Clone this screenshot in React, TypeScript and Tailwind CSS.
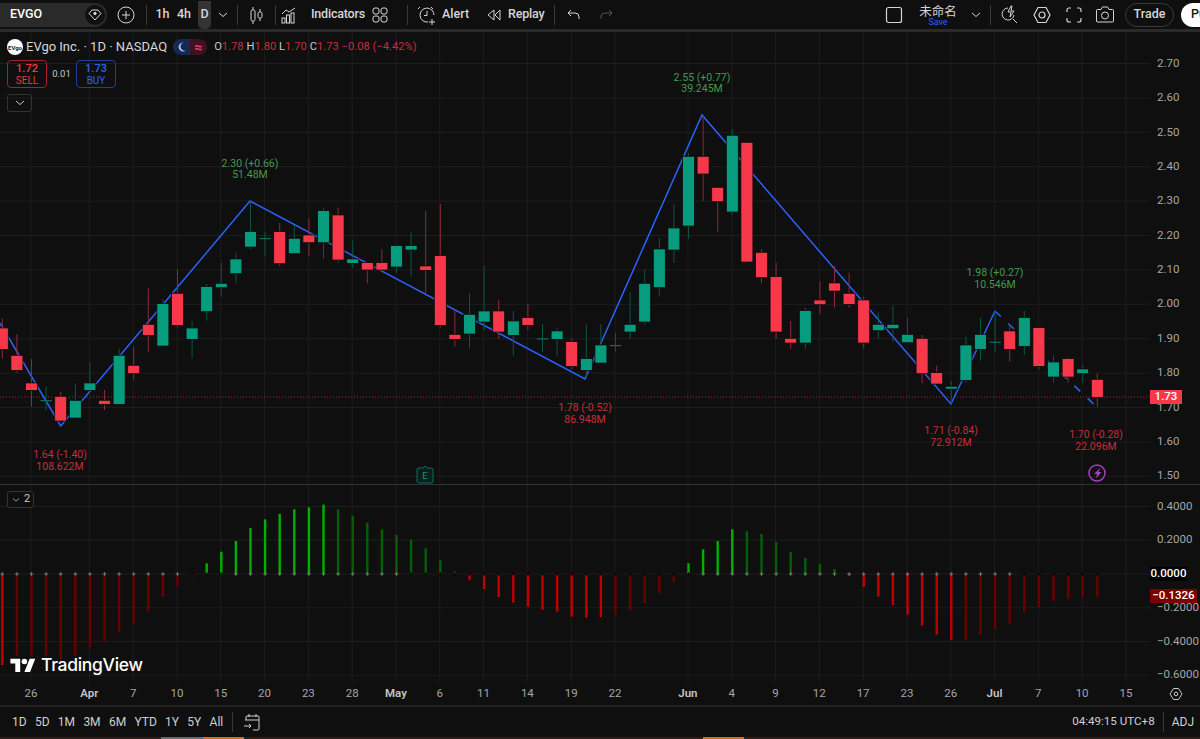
import type { ReactNode } from "react";

const BAR = 14.6;
const barX = (i: number) => 2.3 + BAR * i;
const PLOT_W = 1150;

// hi, body top, body bottom, lo, measured from a 3x crop, y = off + v / 3
type Raw = [number, number, number, number, boolean];
const seg = (off: number, rows: Raw[]) =>
  rows.map(([h, t, b, l, up]) => ({
    h: off + h / 3,
    t: off + t / 3,
    b: off + b / 3,
    l: off + l / 3,
    up,
  }));

const candles = [
  ...seg(190, [
    [385, 415, 477, 505, false],
    [433, 497, 540, 548, false],
    [507, 580, 600, 650, false],
    [590, 630, 634, 660, true],
    [605, 620, 692, 692, false],
    [580, 632, 683, 683, true],
    [517, 580, 600, 600, true],
    [600, 632, 642, 660, false],
    [476, 497, 642, 642, true],
    [470, 527, 550, 568, false],
    [295, 404, 435, 485, false],
    [328, 342, 467, 467, true],
    [238, 311, 405, 412, false],
    [394, 415, 447, 505, true],
    [281, 291, 364, 392, true],
    [218, 281, 292, 320, true],
    [188, 208, 250, 280, true],
    [33, 126, 170, 178, true],
    [125, 144, 148, 200, true],
    [99, 126, 220, 228, false],
    [105, 146, 190, 190, true],
    [85, 136, 157, 197, false],
    [53, 63, 157, 207, true],
    [53, 76, 209, 217, false],
    [151, 208, 219, 233, true],
    [219, 219, 239, 280, false],
    [178, 219, 239, 245, false],
    [168, 168, 230, 248, true],
  ]),
  ...seg(100, [
    [396, 438, 449, 530, true],
    [333, 499, 510, 580, false],
    [312, 468, 675, 683, false],
    [630, 704, 717, 740, false],
    [580, 644, 701, 746, true],
    [498, 634, 665, 690, true],
    [600, 634, 695, 716, false],
    [633, 664, 705, 767, true],
    [611, 654, 675, 690, false],
    [672, 715, 718, 755, true],
    [684, 694, 717, 767, true],
    [715, 726, 798, 808, false],
    [673, 777, 810, 830, true],
    [673, 736, 788, 790, true],
    [699, 735, 738, 755, true],
    [577, 674, 695, 716, true],
    [508, 551, 665, 674, true],
    [415, 448, 562, 590, true],
    [313, 385, 449, 488, true],
    [160, 170, 377, 416, true],
    [45, 170, 221, 303, false],
    [262, 263, 304, 395, false],
    [87, 107, 335, 345, true],
    [127, 128, 485, 488, false],
    [448, 458, 532, 550, false],
    [488, 531, 695, 716, false],
  ]),
  ...seg(240, [
    [243, 296, 308, 326, false],
    [203, 213, 308, 326, true],
    [124, 181, 193, 222, false],
    [78, 130, 152, 203, false],
    [98, 161, 192, 203, false],
    [170, 181, 308, 326, false],
    [218, 254, 271, 296, true],
    [197, 254, 265, 306, true],
    [234, 284, 307, 307, true],
    [285, 296, 400, 430, false],
    [376, 399, 431, 431, false],
    [423, 440, 446, 490, true],
    [290, 316, 420, 428, true],
    [234, 284, 327, 362, true],
    [213, 305, 308, 335, true],
    [255, 274, 327, 365, false],
    [213, 234, 318, 345, true],
    [264, 264, 378, 388, false],
    [346, 367, 410, 428, true],
    [352, 357, 410, 428, false],
    [376, 388, 400, 428, true],
    [400, 419, 471, 500, false],
  ]),
];

// histogram end (3x crop, y = 480 + v / 3) and whether the bar is the bright shade
const hist: [number, boolean][] = [
  [555, true], [527, false], [527, false], [527, false], [537, false], [527, false], [502, false], [484, false],
  [456, false], [432, false], [395, false], [351, false], [319, false], [290, false],
  [250, true], [215, true], [183, true], [144, true], [118, true], [102, true], [88, true], [82, true], [74, true],
  [88, false], [108, false], [128, false], [148, false], [165, false], [179, false], [205, false], [241, false], [274, false],
  [301, true], [327, true], [351, true], [368, true], [380, true], [389, true], [395, true], [410, true], [413, true], [411, true],
  [404, false], [392, false], [369, false], [339, false], [305, false],
  [250, true], [208, true], [183, true], [148, true],
  [154, false], [162, false], [186, false], [216, false], [234, false], [251, false], [267, false],
  [287, true], [321, true], [350, true], [375, true], [404, true], [437, true], [464, true], [480, true],
  [480, false], [464, false], [448, false], [431, false], [396, false], [381, false], [363, false], [357, false], [351, false], [350, false],
];

const ticks = [
  { label: "26" }, { label: "Apr", month: true, ml: "ml-[14.6px]" }, { label: "7" }, { label: "10" }, { label: "15" },
  { label: "20" }, { label: "23" }, { label: "28" }, { label: "May", month: true }, { label: "6" }, { label: "11" },
  { label: "14" }, { label: "19" }, { label: "22" }, { label: "Jun", month: true, ml: "ml-[29.2px]" }, { label: "4" },
  { label: "9" }, { label: "12" }, { label: "17" }, { label: "23" }, { label: "26" }, { label: "Jul", month: true },
  { label: "7" }, { label: "10" }, { label: "15" },
];
const gridX = ticks.reduce<number[]>((acc, t, i) => {
  const prev = i === 0 ? 31 - 43.8 : acc[i - 1];
  return [...acc, prev + 43.8 + (t.ml ? (t.label === "Apr" ? 14.6 : 29.2) : 0)];
}, []);

const prices = ["2.70", "2.60", "2.50", "2.40", "2.30", "2.20", "2.10", "2.00", "1.90", "1.80", "1.70", "1.60", "1.50"];
const priceY = (i: number) => 63.5 + i * 34.4;
const oscY = [506.5, 540.2, 574, 607.7, 641.5, 675.2];

const pivots = [
  { x: 250, y1: 163, y2: 174, a: "2.30 (+0.66)", b: "51.48M", up: true },
  { x: 702, y1: 77, y2: 88, a: "2.55 (+0.77)", b: "39.245M", up: true },
  { x: 995, y1: 272.5, y2: 284.5, a: "1.98 (+0.27)", b: "10.546M", up: true },
  { x: 60, y1: 454, y2: 466, a: "1.64 (-1.40)", b: "108.622M", up: false },
  { x: 585, y1: 407, y2: 419, a: "1.78 (-0.52)", b: "86.948M", up: false },
  { x: 951, y1: 430, y2: 442, a: "1.71 (-0.84)", b: "72.912M", up: false },
  { x: 1096, y1: 434, y2: 446, a: "1.70 (-0.28)", b: "22.096M", up: false },
];

function Icon({ size = 18, vb = 18, className = "", children }: { size?: number; vb?: number; className?: string; children: ReactNode }) {
  return (
    <svg width={size} height={size} viewBox={`0 0 ${vb} ${vb}`} fill="none" stroke="currentColor" strokeWidth="1" className={`shrink-0 ${className}`}>
      {children}
    </svg>
  );
}

function Divider({ className = "" }: { className?: string }) {
  return <div className={`w-px h-[20px] bg-[#3a3a3a] shrink-0 ${className}`} />;
}

function Chevron({ className = "" }: { className?: string }) {
  return (
    <svg width="10" height="6" viewBox="0 0 10 6" fill="none" stroke="currentColor" className={`shrink-0 ${className}`}>
      <path d="M1 1l4 3.5L9 1" />
    </svg>
  );
}

function Toolbar() {
  return (
    <header className="h-[29px] flex items-center text-[12.5px] text-[#d6d6d6] shrink-0">
      <div className="w-[107px] h-[24px] rounded-r-full rounded-l-[12px] bg-[#2a2a2a] flex items-center justify-between pl-[10px] pr-[2px] shrink-0">
        <span className="font-medium text-white">EVGO</span>
        <span className="w-[20px] h-[20px] rounded-full bg-[#101010] flex items-center justify-center">
          <Icon size={14} vb={14}>
            <path d="M4 2h6l3 3.500L7 12 1 5.500 4 2z" />
            <circle cx="7" cy="5.500" r="1.200" fill="currentColor" />
          </Icon>
        </span>
      </div>
      <Icon size={18} className="ml-[10px]">
        <circle cx="9" cy="9" r="8" />
        <path d="M9 5v8M5 9h8" />
      </Icon>
      <Divider className="ml-[11px]" />
      <span className="ml-[5px] w-[21px] text-center font-medium">1h</span>
      <span className="w-[22px] text-center font-medium">4h</span>
      <span className="ml-[3px] w-[13px] h-[28px] rounded-b-[5px] bg-[#333333] flex items-center justify-center font-medium">D</span>
      <Chevron className="ml-[7px]" />
      <Divider className="ml-[9px]" />
      <Icon size={18} className="ml-[10px]">
        <path d="M5 1v3M5 15v3M12 3v3M12 12v3" />
        <rect x="3" y="4" width="4" height="11" rx="1.500" />
        <rect x="10" y="6" width="4" height="6" rx="1.500" />
      </Icon>
      <Divider className="ml-[9px]" />
      <Icon size={18} className="ml-[4px]">
        <path d="M2 8l4-4 3 2 6-4" />
        <rect x="2" y="12" width="3" height="5" />
        <rect x="6.500" y="9" width="3" height="8" />
        <rect x="11" y="7" width="3" height="10" />
      </Icon>
      <span className="ml-[13px] w-[60px] font-medium tracking-[-0.2px]">Indicators</span>
      <Icon size={18}>
        <rect x="2" y="2" width="6" height="6" rx="2" />
        <rect x="10" y="2" width="6" height="6" rx="2" />
        <rect x="2" y="10" width="6" height="6" rx="2" />
        <rect x="10" y="10" width="6" height="6" rx="2" />
      </Icon>
      <Divider className="ml-[18px]" />
      <Icon size={20} vb={20} className="ml-[9px]">
        <path d="M11 17a7 7 0 1 1 6-7" />
        <path d="M10 6v4.500H7M3 2L1 4M14 2l2 2M15 14v6M12 17h6" />
      </Icon>
      <span className="ml-[5px] w-[30px] font-medium">Alert</span>
      <Icon size={16} vb={16} className="ml-[14px]">
        <path d="M8 3L2 8l6 5V3zM14 3L9 8l5 5V3z" />
      </Icon>
      <span className="ml-[6px] w-[38px] font-medium tracking-[-0.2px]">Replay</span>
      <Divider className="ml-[8px]" />
      <Icon size={16} vb={16} className="ml-[11px]">
        <path d="M5 3L2 6l3 3M2 6h7a4 4 0 0 1 4 4v2" />
      </Icon>
      <Icon size={16} vb={16} className="ml-[16px] text-[#555555]">
        <path d="M11 3l3 3-3 3M14 6H7a4 4 0 0 0-4 4v2" />
      </Icon>
      <div className="flex-1" />
      <Icon size={18} className="mr-[13px]">
        <rect x="1.500" y="1.500" width="15" height="15" rx="2" strokeWidth="1.200" />
      </Icon>
      <div className="w-[44px] flex flex-col items-center">
        <span className="text-[12.5px] leading-[15px] font-['Noto_Sans_CJK_SC',sans-serif]">未命名</span>
        <span className="text-[9px] leading-[9px] text-[#2962ff]">Save</span>
      </div>
      <Chevron className="ml-[11px]" />
      <Divider className="ml-[9px]" />
      <Icon size={20} vb={20} className="ml-[9px]">
        <path d="M8 3a6 6 0 1 0 6 7M13 14l4 4" />
        <path d="M11 1L8 7h3l-1 5 4-6h-3l1-5z" />
      </Icon>
      <Icon size={20} vb={20} className="ml-[12px]">
        <path d="M6 2.500h8l4 7.500-4 7.500H6L2 10l4-7.500z" strokeWidth="1.200" />
        <circle cx="10" cy="10" r="3" strokeWidth="1.200" />
      </Icon>
      <Icon size={18} className="ml-[13px]">
        <path d="M6 2H4a2 2 0 0 0-2 2v2M12 2h2a2 2 0 0 1 2 2v2M2 12v2a2 2 0 0 0 2 2h2M16 12v2a2 2 0 0 1-2 2h-2" strokeWidth="1.200" />
      </Icon>
      <Icon size={20} vb={20} className="ml-[12px]">
        <path d="M1.500 5.500a1 1 0 0 1 1-1H6L7.500 2h5L14 4.500h3.500a1 1 0 0 1 1 1V16a1 1 0 0 1-1 1h-15a1 1 0 0 1-1-1V5.500z" />
        <circle cx="10" cy="10.500" r="3.500" />
      </Icon>
      <div className="ml-[10px] w-[49px] h-[24px] rounded-full border border-[#3a3a3a] flex items-center justify-center font-medium shrink-0">Trade</div>
      <div className="ml-[7px] w-[60px] h-[24px] rounded-l-full bg-white text-[#111111] flex items-center pl-[10px] font-medium -mr-[41px] shrink-0">Publish</div>
    </header>
  );
}

function Grid({ rows }: { rows: number[] }) {
  return (
    <>
      {gridX.map((x) => (
        <line key={x} x1={x} x2={x} y1="0" y2="700" stroke="#1d1d1d" />
      ))}
      {rows.map((y) => (
        <line key={y} x1="0" x2={PLOT_W} y1={y} y2={y} stroke="#1d1d1d" />
      ))}
    </>
  );
}

function PriceChart() {
  return (
    <svg width={PLOT_W} height="452" viewBox={`0 32 ${PLOT_W} 452`} className="absolute inset-0">
      <Grid rows={prices.map((_, i) => priceY(i))} />
      <line x1="0" x2={PLOT_W} y1="397" y2="397" stroke="#a32c38" strokeDasharray="1 2" />
      <polyline points="0,323 60.7,426 250,201 585,379 702,115 951,404 995,311" fill="none" stroke="#2962ff" strokeWidth="1.5" />
      <line x1="995" y1="311" x2="1095" y2="405.3" stroke="#2962ff" strokeWidth="1.5" strokeDasharray="8 10.2" />
      {candles.map((c, i) => {
        const x = barX(i);
        const doji = c.b - c.t < 2;
        return (
          <g key={i}>
            <line x1={x} x2={x} y1={c.h} y2={c.l} stroke={c.up ? "#0b5546" : "#8c2b37"} />
            {doji ? (
              <line x1={x - 5.7} x2={x + 5.7} y1={c.t + 0.6} y2={c.t + 0.6} stroke="#0f6f5c" strokeWidth="1.2" />
            ) : (
              <rect x={x - 6} y={c.t - 0.4} width="12" height={c.b - c.t + 0.8} fill={c.up ? "#089c7f" : "#f7384b"} stroke="#0a0a0a" strokeWidth="0.8" />
            )}
          </g>
        );
      })}
      {pivots.map((p) => (
        <text key={p.a} textAnchor="middle" fontSize="10.5" fill={p.up ? "#46994c" : "#c4303c"}>
          <tspan x={p.x} y={p.y1 + 3.5}>{p.a}</tspan>
          <tspan x={p.x} y={p.y2 + 3.5}>{p.b}</tspan>
        </text>
      ))}
      <path d="M417 470a2 2 0 0 1 2-2h4l2-2 2 2h4a2 2 0 0 1 2 2v11a2 2 0 0 1-2 2h-12a2 2 0 0 1-2-2z" fill="#0d1f1c" stroke="#0f6f5c" />
      <text x="425" y="479" textAnchor="middle" fontSize="9.5" fill="#14917a">E</text>
      <circle cx="1097" cy="473" r="8" fill="none" stroke="#a63fc0" strokeWidth="1.5" />
      <path d="M1100.5 467.5l-6.500 6.500h3l-1 4.500 5.500-6.500h-3z" fill="#a63fc0" />
    </svg>
  );
}

function OscChart() {
  const zero = 574;
  return (
    <svg width={PLOT_W} height="197" viewBox={`0 485 ${PLOT_W} 197`} className="absolute inset-0">
      <Grid rows={oscY} />
      {hist.map(([v, bright], i) => {
        const y = 480 + v / 3;
        const green = y < zero;
        const fill = green ? (bright ? "#00b000" : "#056005") : bright ? "#c00000" : "#680000";
        const darkMark = (i >= 13 && i <= 15) || (i >= 28 && i <= 47) || i >= 70;
        return (
          <g key={i}>
            <rect x={barX(i) - 1.2} y={Math.min(y, zero)} width="2.4" height={Math.abs(y - zero)} fill={fill} />
            <path d={`M${barX(i) - 1.8} ${zero}h3.6M${barX(i)} ${zero - 1.8}v3.6`} stroke={darkMark ? "#050505" : "#7a7a7a"} />
          </g>
        );
      })}
    </svg>
  );
}

function Legend() {
  return (
    <div className="absolute left-[7px] top-[7px] flex flex-col items-start">
      <div className="flex items-center h-[16px]">
        <span className="w-[16px] h-[16px] rounded-full bg-white text-[#12233f] text-[6px] font-bold flex items-center justify-center">EVgo</span>
        <span className="ml-[3px] text-[13px] text-[#d8d8d8] whitespace-nowrap">EVgo Inc. · 1D · NASDAQ</span>
        <span className="ml-[6px] flex h-[16px] w-[34px] rounded-full overflow-hidden">
          <span className="w-1/2 bg-[#16294f] flex items-center justify-center">
            <svg width="10" height="10" viewBox="0 0 10 10" fill="#a9c4ff">
              <path d="M6.500 0.500a4.500 4.500 0 1 0 2.500 8 4 4 0 0 1-2.500-8z" />
            </svg>
          </span>
          <span className="w-1/2 bg-[#3c1420] text-[#ff3d6e] text-[14px] leading-none font-bold flex items-center justify-center">≈</span>
        </span>
        <span className="ml-[7px] text-[11.2px] text-[#c4303c] whitespace-nowrap">
          <span className="text-[#c8c8c8]">O</span>1.78 <span className="text-[#c8c8c8]">H</span>1.80 <span className="text-[#c8c8c8]">L</span>1.70{" "}
          <span className="text-[#c8c8c8]">C</span>1.73 −0.08 (−4.42%)
        </span>
      </div>
      <div className="flex items-center mt-[5px]">
        <div className="w-[40px] h-[28px] pt-[1px] rounded-[4px] border border-[#a5202e] flex flex-col items-center justify-center leading-[12px] text-[#f23645]">
          <span className="text-[11px] font-medium">1.72</span>
          <span className="text-[10px]">SELL</span>
        </div>
        <span className="w-[29px] text-center text-[9.5px] text-[#c8c8c8]">0.01</span>
        <div className="w-[40px] h-[28px] pt-[1px] rounded-[4px] border border-[#1d3f9e] flex flex-col items-center justify-center leading-[12px] text-[#2962ff]">
          <span className="text-[11px] font-medium">1.73</span>
          <span className="text-[10px]">BUY</span>
        </div>
      </div>
      <div className="mt-[6px] w-[25px] h-[18px] rounded-[3px] border border-[#333333] flex items-center justify-center text-[#c8c8c8]">
        <Chevron />
      </div>
    </div>
  );
}

function PriceAxis() {
  return (
    <div className="relative flex-1 pt-[14.3px] pl-[7px] text-[11.5px] leading-none text-[#a6a6a6]">
      {prices.map((p) => (
        <div key={p} className="h-[34.4px] flex items-center">{p}</div>
      ))}
      <div className="absolute left-0 top-[358px] w-[32px] h-[14px] bg-[#f7384b] text-white font-medium flex items-center justify-center">1.73</div>
    </div>
  );
}

function OscAxis() {
  return (
    <div className="relative flex-1 pt-[4.6px] pl-[7px] text-[11.5px] leading-none text-[#a6a6a6]">
      {["0.4000", "0.2000", "0.0000", "−0.2000", "−0.4000", "−0.6000"].map((p) => (
        <div key={p} className="h-[33.75px] flex items-center">
          {p === "0.0000" ? (
            <span className="-ml-[7px] w-[37px] h-[14px] bg-black text-white font-medium flex items-center justify-center">{p}</span>
          ) : (
            p
          )}
        </div>
      ))}
      <div className="absolute left-0 top-[104px] w-[47px] h-[14px] bg-[#7c0000] text-white font-medium flex items-center justify-center">−0.1326</div>
    </div>
  );
}

function TimeAxis() {
  return (
    <div className="h-[23px] flex items-center pl-[9.1px] text-[11.5px] text-[#a6a6a6] shrink-0 relative">
      {ticks.map((t, i) => (
        <span key={i} className={`w-[43.8px] shrink-0 text-center ${t.month ? "font-semibold text-[#c4c4c4]" : ""} ${t.ml ?? ""}`}>
          {t.label}
        </span>
      ))}
      <Icon size={14} vb={14} className="ml-[21px] text-[#c8c8c8]">
        <path d="M4.500 1.500h5L13 7l-3.500 5.500h-5L1 7l3.500-5.500z" />
        <circle cx="7" cy="7" r="1.800" />
      </Icon>
    </div>
  );
}

function BottomBar() {
  return (
    <footer className="h-[32px] border-t-2 border-[#222222] flex items-center pl-[12px] text-[12px] text-[#d0d0d0] shrink-0">
      <div className="flex items-center gap-[8.3px]">
        {["1D", "5D", "1M", "3M", "6M", "YTD", "1Y", "5Y", "All"].map((r) => (
          <span key={r}>{r}</span>
        ))}
      </div>
      <Divider className="ml-[9px]" />
      <Icon size={18} className="ml-[10px]">
        <path d="M3 7V4a1 1 0 0 1 1-1h11a1 1 0 0 1 1 1v12a1 1 0 0 1-1 1h-5M2 7h14M6 1v3M13 1v3M1 13h7M6 11l2 2-2 2" />
      </Icon>
      <div className="flex-1" />
      <span className="text-[11.6px]">04:49:15 UTC+8</span>
      <Divider className="ml-[8px]" />
      <span className="ml-[8px] mr-[6px]">ADJ</span>
    </footer>
  );
}

export default function App() {
  return (
    <div className="w-[1200px] h-[739px] overflow-hidden flex flex-col bg-[#0f0f0f] font-['Roboto','Noto_Sans_CJK_SC',sans-serif]">
      <Toolbar />
      <div className="h-[3px] bg-[#2a2a2a] shrink-0" />
      <div className="h-[452px] flex shrink-0">
        <div className="relative w-[1150px] shrink-0">
          <PriceChart />
          <Legend />
        </div>
        <PriceAxis />
      </div>
      <div className="h-px bg-[#333333] shrink-0" />
      <div className="h-[197px] flex shrink-0">
        <div className="relative w-[1150px] shrink-0">
          <OscChart />
          <div className="absolute left-[7px] top-[6px] w-[27px] h-[17px] rounded-[3px] border border-[#333333] bg-[#0f0f0f] flex items-center justify-center gap-[3px] text-[11px] text-[#c8c8c8]">
            <Chevron className="scale-75" />
            <span>2</span>
          </div>
          <div className="absolute left-[10px] top-[171px] flex items-center gap-[5px] text-white">
            <svg width="26" height="14" viewBox="0 0 36 20" fill="currentColor">
              <path d="M14 20H7V8H0V1h14zM28 20h-8l7.500-19h8z" />
              <circle cx="20" cy="5" r="4" />
            </svg>
            <span className="text-[17.5px] leading-[18px] font-medium font-['Inter',sans-serif] tracking-[-0.3px]">TradingView</span>
          </div>
        </div>
        <OscAxis />
      </div>
      <TimeAxis />
      <BottomBar />
      <div className="h-[2px] flex bg-[#2a1f18] shrink-0">
        <div className="w-[161px]" />
        <div className="w-[42px] bg-[#6a6a6a]" />
        <div className="w-[41px] bg-[#d86a1a]" />
        <div className="w-[459px]" />
        <div className="w-[41px] bg-[#d86a1a]" />
      </div>
    </div>
  );
}
